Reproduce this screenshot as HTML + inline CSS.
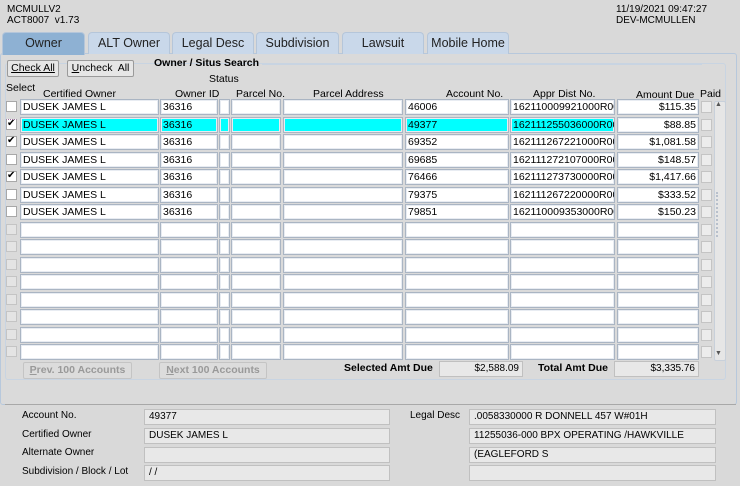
<!DOCTYPE html>
<html><head><meta charset="utf-8"><style>
*{box-sizing:border-box;margin:0;padding:0}
body{width:740px;height:486px;background:#d9d9d9;font-family:"Liberation Sans",Arial,sans-serif;font-size:11px;color:#000;position:relative;overflow:hidden}
.a{position:absolute}
.tab{position:absolute;top:32px;height:22px;background:#c9d8ea;border:1px solid #b5c6da;border-bottom:none;border-radius:4px 4px 0 0;font-size:12.5px;text-align:center;line-height:21px;color:#222}
.c{position:absolute;height:16px;background:#fff;border:1px solid #aab5c3;font-size:10.5px;line-height:14px;padding-left:2px;white-space:nowrap;overflow:hidden;box-shadow:inset 0 0 0 1px #e8ecf2}
.r{position:absolute;left:0;width:740px;height:17px}
.cb{position:absolute;left:6px;top:2px;width:11px;height:11px;background:#fff;border:1px solid #a8a8a8}
.cbd{background:#e4e4e4;border-color:#c4c4c4}
.pd{position:absolute;left:701px;top:2px;width:11px;height:12px;background:#ececec;border:1px solid #c4c4c4}
.c1{left:20px;width:139px}.c2{left:160px;width:58px}.c3{left:219px;width:11px}.c4{left:231px;width:50px}.c5{left:283px;width:120px}.c6{left:405px;width:104px}.c7{left:510px;width:105px}.c8{left:617px;width:82px;text-align:right;padding-right:2px}
.cy .c{background:#00ffff}
.h{position:absolute;font-size:10.5px}
.btn{position:absolute;height:17px;border:1px solid #9a9a9a;background:#e6e6e6;font-size:10.5px;line-height:15px;text-align:center;border-radius:2px}
.ro{position:absolute;height:16px;background:#e8e8e8;border:1px solid #c0c0c0;font-size:10px;line-height:14px;padding-left:4px}
.lb{position:absolute;font-size:10px}
</style></head><body>
<div class="a" style="left:7px;top:4px;font-size:10px;line-height:11px">MCMULLV2<br>ACT8007&nbsp; v1.73</div>
<div class="a" style="left:616px;top:4px;font-size:10px;line-height:11px">11/19/2021 09:47:27<br>DEV-MCMULLEN</div>
<div class="a" style="left:0;top:53px;width:737px;height:352px;border:1px solid #b7c8dc;border-radius:3px;background:#dadada"></div>
<div class="a" style="left:5px;top:63px;width:721px;height:317px;border:1px solid #c8d4e2;border-radius:3px"></div>
<div class="tab" style="left:2px;width:83px;background:#8eb1d3;height:23px">Owner</div>
<div class="tab" style="left:88px;width:82px">ALT Owner</div>
<div class="tab" style="left:172px;width:82px">Legal Desc</div>
<div class="tab" style="left:256px;width:83px">Subdivision</div>
<div class="tab" style="left:342px;width:82px">Lawsuit</div>
<div class="tab" style="left:427px;width:82px">Mobile Home</div>
<div class="btn" style="left:7px;top:60px;width:52px"><u>Check All</u></div>
<div class="btn" style="left:67px;top:60px;width:67px"><u>U</u>ncheck&nbsp; All</div>
<div class="h" style="left:154px;top:57px;font-weight:bold">Owner / Situs Search</div>
<div class="a" style="left:262px;top:64px;width:440px;border-top:1px solid #c8d4e2"></div>
<div class="h" style="left:209px;top:73px">Status</div>
<div class="h" style="left:6px;top:82px">Select</div>
<div class="h" style="left:43px;top:88px">Certified Owner</div>
<div class="h" style="left:175px;top:88px">Owner ID</div>
<div class="h" style="left:236px;top:88px">Parcel No.</div>
<div class="h" style="left:313px;top:88px">Parcel Address</div>
<div class="h" style="left:446px;top:88px">Account No.</div>
<div class="h" style="left:533px;top:88px">Appr Dist No.</div>
<div class="h" style="left:636px;top:89px">Amount Due</div>
<div class="h" style="left:700px;top:88px">Paid</div>

<div class="r" style="top:99px"><div class="cb"></div><div class="c c1">DUSEK JAMES L</div><div class="c c2">36316</div><div class="c c3"></div><div class="c c4"></div><div class="c c5"></div><div class="c c6">46006</div><div class="c c7">162110009921000R00</div><div class="c c8">$115.35</div><div class="pd"></div></div>
<div class="r cy" style="top:116.5px"><div class="cb" style="font-size:10px;line-height:8px;border-top:1px dotted #a070a0">✔</div><div class="c c1">DUSEK JAMES L</div><div class="c c2">36316</div><div class="c c3"></div><div class="c c4"></div><div class="c c5"></div><div class="c c6">49377</div><div class="c c7">162111255036000R00</div><div class="c c8" style="background:#fff">$88.85</div><div class="pd"></div></div>
<div class="r" style="top:134px"><div class="cb" style="font-size:10px;line-height:8px">✔</div><div class="c c1">DUSEK JAMES L</div><div class="c c2">36316</div><div class="c c3"></div><div class="c c4"></div><div class="c c5"></div><div class="c c6">69352</div><div class="c c7">162111267221000R00</div><div class="c c8">$1,081.58</div><div class="pd"></div></div>
<div class="r" style="top:151.5px"><div class="cb"></div><div class="c c1">DUSEK JAMES L</div><div class="c c2">36316</div><div class="c c3"></div><div class="c c4"></div><div class="c c5"></div><div class="c c6">69685</div><div class="c c7">162111272107000R00</div><div class="c c8">$148.57</div><div class="pd"></div></div>
<div class="r" style="top:169px"><div class="cb" style="font-size:10px;line-height:8px">✔</div><div class="c c1">DUSEK JAMES L</div><div class="c c2">36316</div><div class="c c3"></div><div class="c c4"></div><div class="c c5"></div><div class="c c6">76466</div><div class="c c7">162111273730000R00</div><div class="c c8">$1,417.66</div><div class="pd"></div></div>
<div class="r" style="top:186.5px"><div class="cb"></div><div class="c c1">DUSEK JAMES L</div><div class="c c2">36316</div><div class="c c3"></div><div class="c c4"></div><div class="c c5"></div><div class="c c6">79375</div><div class="c c7">162111267220000R00</div><div class="c c8">$333.52</div><div class="pd"></div></div>
<div class="r" style="top:204px"><div class="cb"></div><div class="c c1">DUSEK JAMES L</div><div class="c c2">36316</div><div class="c c3"></div><div class="c c4"></div><div class="c c5"></div><div class="c c6">79851</div><div class="c c7">162110009353000R00</div><div class="c c8">$150.23</div><div class="pd"></div></div>
<div class="r" style="top:221.5px"><div class="cb cbd"></div><div class="c c1"></div><div class="c c2"></div><div class="c c3"></div><div class="c c4"></div><div class="c c5"></div><div class="c c6"></div><div class="c c7"></div><div class="c c8"></div><div class="pd"></div></div>
<div class="r" style="top:239px"><div class="cb cbd"></div><div class="c c1"></div><div class="c c2"></div><div class="c c3"></div><div class="c c4"></div><div class="c c5"></div><div class="c c6"></div><div class="c c7"></div><div class="c c8"></div><div class="pd"></div></div>
<div class="r" style="top:256.5px"><div class="cb cbd"></div><div class="c c1"></div><div class="c c2"></div><div class="c c3"></div><div class="c c4"></div><div class="c c5"></div><div class="c c6"></div><div class="c c7"></div><div class="c c8"></div><div class="pd"></div></div>
<div class="r" style="top:274px"><div class="cb cbd"></div><div class="c c1"></div><div class="c c2"></div><div class="c c3"></div><div class="c c4"></div><div class="c c5"></div><div class="c c6"></div><div class="c c7"></div><div class="c c8"></div><div class="pd"></div></div>
<div class="r" style="top:291.5px"><div class="cb cbd"></div><div class="c c1"></div><div class="c c2"></div><div class="c c3"></div><div class="c c4"></div><div class="c c5"></div><div class="c c6"></div><div class="c c7"></div><div class="c c8"></div><div class="pd"></div></div>
<div class="r" style="top:309px"><div class="cb cbd"></div><div class="c c1"></div><div class="c c2"></div><div class="c c3"></div><div class="c c4"></div><div class="c c5"></div><div class="c c6"></div><div class="c c7"></div><div class="c c8"></div><div class="pd"></div></div>
<div class="r" style="top:326.5px"><div class="cb cbd"></div><div class="c c1"></div><div class="c c2"></div><div class="c c3"></div><div class="c c4"></div><div class="c c5"></div><div class="c c6"></div><div class="c c7"></div><div class="c c8"></div><div class="pd"></div></div>
<div class="r" style="top:344px"><div class="cb cbd"></div><div class="c c1"></div><div class="c c2"></div><div class="c c3"></div><div class="c c4"></div><div class="c c5"></div><div class="c c6"></div><div class="c c7"></div><div class="c c8"></div><div class="pd"></div></div>

<div class="a" style="left:714px;top:101px;width:12px;height:260px;background:#e6e6e6;border:1px solid #c8d0da;border-radius:2px"></div>
<div class="a" style="left:715px;top:101px;font-size:7px;color:#555">▲</div>
<div class="a" style="left:715px;top:350px;font-size:7px;color:#555">▼</div>
<div class="a" style="left:716px;top:192px;width:6px;height:45px;border-left:2px dotted #b8c0cc"></div>

<div class="btn" style="left:23px;top:362px;width:109px;color:#999;border-color:#c4c4c4;background:#dcdcdc;font-weight:bold"><u>P</u>rev. 100 Accounts</div>
<div class="btn" style="left:159px;top:362px;width:108px;color:#999;border-color:#c4c4c4;background:#dcdcdc;font-weight:bold"><u>N</u>ext 100 Accounts</div>
<div class="h" style="left:344px;top:362px;font-weight:bold">Selected Amt Due</div>
<div class="ro" style="left:439px;top:361px;width:84px;text-align:right;padding-right:3px">$2,588.09</div>
<div class="h" style="left:538px;top:362px;font-weight:bold">Total Amt Due</div>
<div class="ro" style="left:614px;top:361px;width:85px;text-align:right;padding-right:3px">$3,335.76</div>

<div class="a" style="left:5px;top:404px;width:731px;border-top:1px solid #a8a8a8"></div>
<div class="lb" style="left:22px;top:410px">Account No.</div>
<div class="lb" style="left:22px;top:429px">Certified Owner</div>
<div class="lb" style="left:22px;top:447px">Alternate Owner</div>
<div class="lb" style="left:22px;top:466px">Subdivision / Block / Lot</div>
<div class="ro" style="left:144px;top:409px;width:246px">49377</div>
<div class="ro" style="left:144px;top:428px;width:246px">DUSEK JAMES L</div>
<div class="ro" style="left:144px;top:447px;width:246px"></div>
<div class="ro" style="left:144px;top:465px;width:246px">/ /</div>
<div class="lb" style="left:410px;top:410px">Legal Desc</div>
<div class="ro" style="left:469px;top:409px;width:247px">.0058330000 R DONNELL 457 W#01H</div>
<div class="ro" style="left:469px;top:428px;width:247px">11255036-000 BPX OPERATING /HAWKVILLE</div>
<div class="ro" style="left:469px;top:447px;width:247px">(EAGLEFORD S</div>
<div class="ro" style="left:469px;top:465px;width:247px"></div>
</body></html>
